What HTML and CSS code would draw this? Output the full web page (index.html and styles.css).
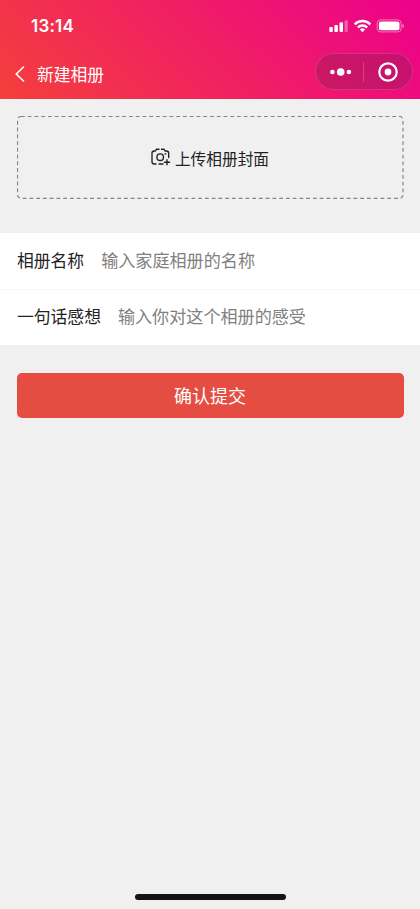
FILE: index.html
```html
<!DOCTYPE html>
<html lang="zh-CN">
<head>
<meta charset="utf-8">
<meta name="viewport" content="width=device-width, initial-scale=1">
<title>新建相册</title>
<link rel="stylesheet" href="styles.css">
</head>
<body>
<div class="screen">
  <header class="header">
    <div class="status">
      <span class="time">13:14</span>
      <svg class="status-icons" width="76" height="16" viewBox="0 0 76 16" fill="#fff">
        <rect x="0.3" y="9" width="3.5" height="5" rx="1"/>
        <rect x="5.4" y="7" width="3.5" height="7" rx="1"/>
        <rect x="10.5" y="4.2" width="3.5" height="9.8" rx="1"/>
        <rect x="15.6" y="2.2" width="3.2" height="11.8" rx="1" opacity=".35"/>
        <g fill="none" stroke="#fff" stroke-width="2.4">
          <path d="M25.7 6.3a11 11 0 0 1 15.6 0"/>
          <path d="M28.8 9.5a6.7 6.7 0 0 1 9.4 0"/>
        </g>
        <path d="M33.5 14.2 30.9 11.5a3.8 3.8 0 0 1 5.2 0z"/>
        <rect x="48.2" y="1.9" width="24" height="12" rx="3.4" fill="none" stroke="#fff" stroke-opacity=".45"/>
        <rect x="49.9" y="3.6" width="20.6" height="8.6" rx="2"/>
        <path d="M73.4 6q1.7.5 1.7 2t-1.7 2z" opacity=".5"/>
      </svg>
    </div>
    <div class="nav">
      <svg class="back" width="10" height="16" viewBox="0 0 10 16" fill="none" stroke="#fff" stroke-width="1.6" stroke-linecap="round" stroke-linejoin="round"><path d="M8.5 1 1.2 8l7.3 7"/></svg>
      <h1 class="title">新建相册</h1>
      <div class="capsule">
        <svg width="22" height="8" viewBox="0 0 22 8" fill="#fff"><circle cx="2.4" cy="4" r="2.3"/><circle cx="10.7" cy="4" r="3.8"/><circle cx="18.9" cy="4" r="2.3"/></svg>
        <span class="divider"></span>
        <svg width="20" height="20" viewBox="0 0 20 20"><circle cx="10" cy="10" r="8.7" fill="none" stroke="#fff" stroke-width="2.2"/><circle cx="10" cy="10" r="3.4" fill="#fff"/></svg>
      </div>
    </div>
  </header>
  <main>
    <div class="upload">
      <svg class="frame" width="387" height="83" viewBox="0 0 387 83" fill="none" stroke="#858585"><rect x=".5" y=".5" width="385.5" height="81.8" rx="3.5" stroke-width="1.2" stroke-dasharray="3.8 2.95"/></svg>
      <svg class="camera" width="20" height="18" viewBox="0 0 20 18" fill="none" stroke="#222" stroke-width="1.35" stroke-linecap="round" stroke-linejoin="round">
        <path d="M5 16H3.2Q1 16 1 13.8V5.2Q1 3 3.2 3H4.4L5.5 1.2H8"/>
        <path d="M10.5 1.2H13L14 3H15.3Q17.7 3 17.7 5.2V9.5"/>
        <path d="M8 16H12M14 5.9H15"/>
        <circle cx="9.2" cy="9.2" r="3.3"/>
        <path d="M16 11.6V16.8M13.4 14.2H18.6"/>
      </svg>
      <span>上传相册封面</span>
    </div>
    <form class="form">
      <label class="row"><span class="label">相册名称</span><input class="field" type="text" placeholder="输入家庭相册的名称"></label>
      <label class="row"><span class="label">一句话感想</span><input class="field" type="text" placeholder="输入你对这个相册的感受"></label>
    </form>
    <button class="submit" type="button">确认提交</button>
  </main>
  <div class="home"></div>
</div>
</body>
</html>
```
FILE: styles.css
```css
* { box-sizing: border-box; }

body {
  margin: 0;
  background: #f0f0f0;
  color: #222;
  font-family: "Noto Sans CJK SC", sans-serif;
  font-size: 16.8px;
}

.screen {
  display: flex;
  flex-direction: column;
  height: 909px;
  overflow: hidden;
}

svg { display: block; flex: none; }

.header {
  height: 99px;
  background: linear-gradient(45deg, #f43f3b, #ec008c);
  color: #fff;
}

.status {
  display: flex;
  justify-content: space-between;
  padding: 16px 15px 0 31px;
  height: 49px;
}

.time {
  font: 600 17px/20px Inter, sans-serif;
  letter-spacing: 0.2px;
}

.status-icons { margin-top: 2px; }

.nav {
  display: flex;
  align-items: center;
  height: 50px;
  padding: 0 7px 4px 15px;
}

.back { margin-top: 4px; }

.title {
  flex: 1;
  margin: 4px 0 0 12px;
  font-size: 16.8px;
  font-weight: 400;
  line-height: 24px;
}

.capsule {
  display: flex;
  align-items: center;
  width: 98px;
  height: 37px;
  margin-top: -1px;
  padding: 0 14px;
  border: 1px solid rgba(255, 255, 255, 0.14);
  border-radius: 19px;
  background: rgba(135, 30, 80, 0.36);
}

.divider {
  width: 1px;
  height: 20px;
  margin: 0 14px 0 11px;
  background: rgba(255, 255, 255, 0.2);
}

.upload {
  position: relative;
  display: flex;
  align-items: center;
  justify-content: center;
  gap: 4px;
  height: 83px;
  margin: 17px 16.5px 0;
  padding-top: 2px;
  font-size: 15.7px;
}

.frame {
  position: absolute;
  inset: 0;
}

.camera { margin-top: -3px; }

.form {
  margin: 34px 0 28px;
  background: #fff;
}

.row {
  display: flex;
  align-items: center;
  height: 56px;
  padding: 0 17px 2px;
}

.row + .row { border-top: 1px solid #f5f5f5; }

.label { margin-right: 17px; }

.row + .row .label { padding-bottom: 2px; }

.field {
  flex: 1;
  min-width: 0;
  padding: 0 0 2px;
  border: 0;
  outline: 0;
  background: none;
  font: inherit;
  font-size: 17.1px;
}

.field::placeholder { color: #808080; opacity: 1; }

.submit {
  display: block;
  width: calc(100% - 33px);
  height: 45px;
  margin: 0 auto;
  padding: 0 0 1px;
  border: 0;
  border-radius: 5px;
  background: #e54d42;
  color: #fff;
  font: inherit;
  font-size: 18px;
}

.home {
  width: 151px;
  height: 6px;
  margin: auto auto 9px;
  border-radius: 3px;
  background: #141414;
}
```
